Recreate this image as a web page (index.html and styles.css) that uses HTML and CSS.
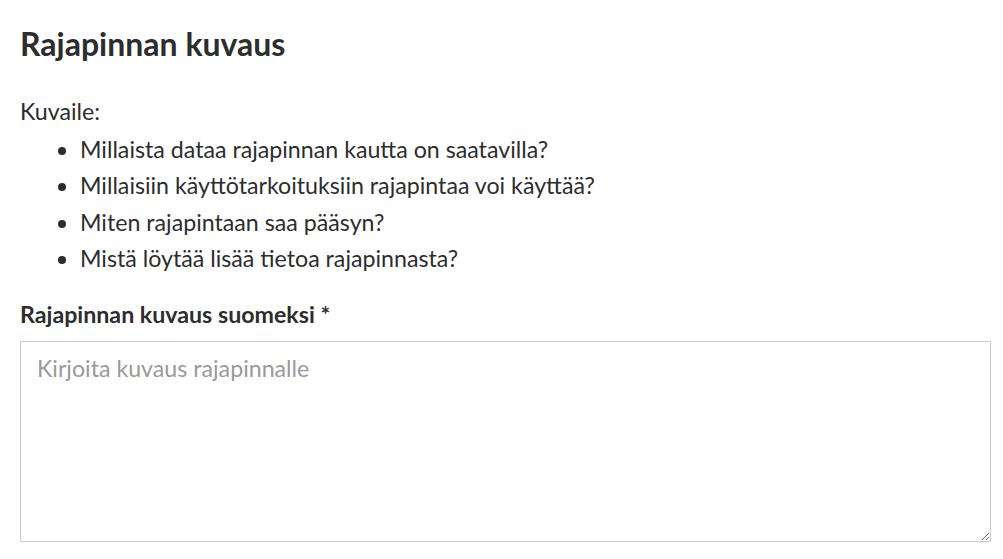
FILE: index.html
```html
<!doctype html>
<html>
<head>
<title>Rajapinnan kuvaus</title>
<link rel="stylesheet" href="styles.css">
</head>
<body>
<section class="description">
	<h2 class="title">Rajapinnan kuvaus</h2>
	<p class="intro">Kuvaile:</p>
	<ul class="hints">
		<li>Millaista dataa rajapinnan kautta on saatavilla?</li>
		<li>Millaisiin käyttötarkoituksiin rajapintaa voi käyttää?</li>
		<li>Miten rajapintaan saa pääsyn?</li>
		<li>Mistä löytää lisää tietoa rajapinnasta?</li>
	</ul>
	<label class="field-label" for="desc-fi">Rajapinnan kuvaus suomeksi *</label>
	<textarea id="desc-fi" class="field" placeholder="Kirjoita kuvaus rajapinnalle"></textarea>
</section>
</body>
</html>
```
FILE: styles.css
```css
body {
  margin: 0;
  padding: 0 12px 0 20px;
  font-family: Lato, "Noto Sans", sans-serif;
  color: #2d2d2d;
  background: #fff;
}
.title {
  margin: 24px 0 0;
  font-size: 32px;
  font-weight: 700;
  line-height: 40px;
}
.intro {
  margin: 29px 0 0;
  font-size: 23.2px;
  line-height: 36px;
}
.hints {
  margin: 0;
  padding: 2px 0 0 60px;
  font-size: 23.2px;
  line-height: 36.3px;
}
.field-label {
  display: block;
  margin-top: 20px;
  font-size: 23.2px;
  font-weight: 700;
  line-height: 36px;
}
.field {
  display: block;
  box-sizing: border-box;
  width: 100%;
  height: 201px;
  margin-top: 9px;
  padding: 12px 16px;
  border: 1px solid #cccccc;
  font-family: inherit;
  font-size: 23.2px;
  color: #2d2d2d;
}
.field::placeholder {
  color: #9a9a9a;
}
```
